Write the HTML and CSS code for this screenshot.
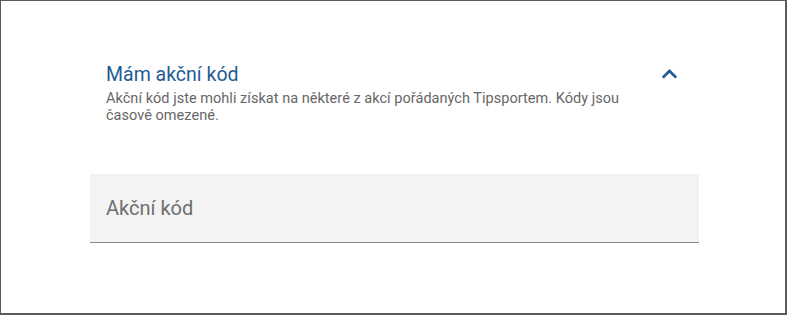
FILE: index.html
```html
<!DOCTYPE html>
<html lang="cs">
<head>
<meta charset="utf-8">
<link rel="stylesheet" href="styles.css">
</head>
<body>
<div class="frame">
  <div class="promo">
    <div class="promo-head">
      <div class="promo-text">
        <h2 class="promo-title">Mám akční kód</h2>
        <p class="promo-desc">Akční kód jste mohli získat na některé z akcí pořádaných Tipsportem. Kódy jsou časově omezené.</p>
      </div>
      <svg class="chevron" width="17" height="11" viewBox="0 0 17 11" aria-hidden="true">
        <path d="M1.8 9.6 L8.5 3 L15.2 9.6" fill="none" stroke="#1f5b94" stroke-width="2.7"/>
      </svg>
    </div>
    <label class="field">
      <input class="field-input" type="text" placeholder="Akční kód">
    </label>
  </div>
</div>
</body>
</html>
```
FILE: styles.css
```css
html, body {
  margin: 0;
  padding: 0;
  background: #ffffff;
}
.frame {
  box-sizing: border-box;
  width: 787px;
  height: 315px;
  border-left: 1px solid #5a5a5a;
  border-top: 1px solid #5a5a5a;
  border-right: 2px solid #5a5a5a;
  border-bottom: 2px solid #5a5a5a;
  padding: 62px 0 0 89px;
  font-family: Roboto, "Noto Sans", sans-serif;
}
.promo {
  width: 609px;
}
.promo-head {
  display: flex;
  align-items: flex-start;
  justify-content: space-between;
  padding: 0 21px 0 16px;
}
.promo-text {
  width: 545px;
}
.promo-title {
  margin: 0;
  font-size: 19.5px;
  font-weight: 400;
  line-height: 24px;
  color: #1f5b94;
}
.promo-desc {
  margin: 3px 0 0;
  font-size: 14.5px;
  line-height: 17px;
  letter-spacing: 0.03px;
  color: #676767;
}
.chevron {
  margin-top: 5px;
}
.field {
  display: block;
  margin-top: 50px;
}
.field-input {
  box-sizing: border-box;
  display: block;
  width: 100%;
  height: 69px;
  margin: 0;
  padding: 0 16px;
  border: 0;
  border-bottom: 1px solid #8a8a8a;
  background: #f3f3f3;
  font-family: Roboto, "Noto Sans", sans-serif;
  font-size: 20px;
  color: #333;
  outline: none;
}
.field-input::placeholder {
  color: #6f6f6f;
  opacity: 1;
}
```
